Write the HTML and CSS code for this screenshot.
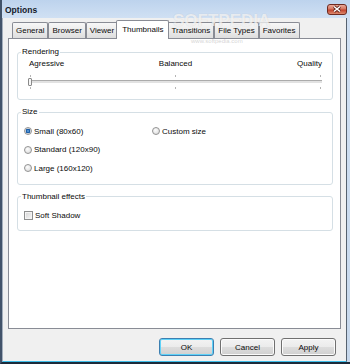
FILE: index.html
```html
<!DOCTYPE html>
<html lang="en">

<head>
  <meta charset="UTF-8">
  <title>Options</title>
  <link rel="stylesheet" href="styles.css">
</head>

<body>
  <div class="window">
    <!--標題欄-->
    <div class="titlebar">
      <span class="title">Options</span>
      <span class="close">
        <svg width="10" height="8" viewBox="0 0 10 8">
          <path d="M2 1.5 8 6.5M8 1.5 2 6.5" stroke="#5a1c12" stroke-width="3" />
          <path d="M2 1.5 8 6.5M8 1.5 2 6.5" stroke="#fff" stroke-width="1.6" />
        </svg>
      </span>
    </div>

    <div class="client">
      <!--選項卡-->
      <div class="tabs">
        <span class="tab">General</span>
        <span class="tab">Browser</span>
        <span class="tab">Viewer</span>
        <span class="tab selected">Thumbnails</span>
        <span class="tab">Transitions</span>
        <span class="tab">File Types</span>
        <span class="tab">Favorites</span>
      </div>

      <div class="panel">
        <fieldset class="group">
          <legend>Rendering</legend>
          <div class="scale">
            <div class="scale-labels">
              <span>Agressive</span>
              <span class="mid">Balanced</span>
              <span class="end">Quality</span>
            </div>
            <div class="ticks top"><i></i><i></i><i></i></div>
            <div class="track"><span class="thumb"></span></div>
            <div class="ticks bottom"><i></i><i></i><i></i></div>
          </div>
        </fieldset>

        <fieldset class="group size">
          <legend>Size</legend>
          <div class="options">
            <label class="opt"><span class="radio checked"></span>Small (80x60)</label>
            <label class="opt"><span class="radio"></span>Custom size</label>
            <label class="opt"><span class="radio"></span>Standard (120x90)</label>
            <span></span>
            <label class="opt"><span class="radio"></span>Large (160x120)</label>
          </div>
        </fieldset>

        <fieldset class="group effects">
          <legend>Thumbnail effects</legend>
          <label class="opt"><span class="check"></span>Soft Shadow</label>
        </fieldset>
      </div>

      <!--按鈕-->
      <div class="buttons">
        <button class="btn default">OK</button>
        <button class="btn">Cancel</button>
        <button class="btn">Apply</button>
      </div>
    </div>

    <div class="watermark">SOFTPEDIA<small>www.softpedia.com</small></div>
  </div>
</body>

</html>
```

FILE: styles.css
```css
* {
  margin: 0;
  padding: 0;
  box-sizing: border-box;
}

body {
  width: 350px;
  height: 364px;
  overflow: hidden;
  font-family: "Liberation Sans", Arial, sans-serif;
  font-size: 8px;
  color: #0a0a0a;
}

.window {
  /*開啟相對定位，給水印用*/
  position: relative;
  width: 350px;
  height: 364px;
  display: flex;
  flex-direction: column;
  background: linear-gradient(#bdd3ed, #d0e0f3 18px, #c6d7eb);
  border-left: 2px solid #42536a;
  border-bottom: 2px solid #1b2a3a;
}

.titlebar {
  height: 18px;
  display: flex;
  align-items: center;
  justify-content: space-between;
  padding: 0 3px 0 3px;
}

.title {
  font-weight: bold;
  font-size: 8.5px;
  color: #15192a;
  padding-top: 1px;
}

.close {
  width: 20px;
  height: 11px;
  border: 1px solid #6e2a20;
  border-radius: 3px;
  background: linear-gradient(#eaa999, #d6755f 45%, #c2432e 55%, #dc8a6e);
  display: flex;
  align-items: center;
  justify-content: center;
}

.client {
  flex: 1;
  margin-right: 3px;
  background: #f0f0f0;
  border-left: 1px solid #a4afbd;
  border-right: 1px solid #56626f;
  border-bottom: 1px solid #3cbde8;
  padding: 2px 5px 0 5px;
  display: flex;
  flex-direction: column;
}

/*選項卡*/
.tabs {
  display: flex;
  align-items: flex-end;
  height: 18px;
  padding-left: 4px;
}

.tab {
  height: 16px;
  padding: 0 3px;
  border: 1px solid #898c95;
  border-bottom: 0;
  border-radius: 2px 2px 0 0;
  background: linear-gradient(#f7f7f7, #ebebeb 50%, #dedede);
  line-height: 15px;
  white-space: nowrap;
}

.tab.selected {
  position: relative;
  z-index: 1;
  height: 19px;
  margin: 0 -2px -1px;
  padding: 1px 5px 0;
  background: #fff;
}

.panel {
  height: 291px;
  background: #fff;
  border: 1px solid #898c95;
  padding: 8px 7px 0 8px;
  display: flex;
  flex-direction: column;
  gap: 7px;
}

.group {
  border: 1px solid #d5dfe5;
  border-radius: 3px;
  padding: 0 7px 0 6px;
  min-width: 0;
}

.group legend {
  line-height: 10px;
  padding: 0 1px;
  margin-left: -3px;
}

/*滑塊*/
.scale {
  margin: 2px 3px 10px 6px;
}

.scale-labels {
  display: grid;
  grid-template-columns: 1fr 1fr 1fr;
  line-height: 10px;
  margin-left: -1px;
}

.scale-labels .mid {
  text-align: center;
}

.scale-labels .end {
  text-align: right;
}

.ticks {
  display: flex;
  justify-content: space-between;
  height: 2px;
  padding: 0 1px 0 0;
}

.ticks i {
  width: 1px;
  background: #b4b4b4;
}

.ticks.top {
  margin-top: 6px;
}

.ticks.bottom {
  margin-top: 4px;
}

.track {
  position: relative;
  height: 3px;
  margin-top: 3px;
  border-top: 1px solid #ababab;
  background: #e2e2e2;
}

.thumb {
  position: absolute;
  left: -2px;
  top: -3px;
  width: 4px;
  height: 8px;
  border: 1px solid #8a8a8a;
  border-radius: 1px;
  background: #f6f6f6;
}

/*單選*/
.size .options {
  display: grid;
  grid-template-columns: 128px 1fr;
  grid-auto-rows: 18.5px;
  margin-top: 5px;
  margin-bottom: 6px;
}

.opt {
  display: flex;
  align-items: center;
  gap: 2px;
  white-space: nowrap;
}

.radio {
  width: 8px;
  height: 8px;
  border: 1px solid #939393;
  border-radius: 50%;
  background: radial-gradient(circle at 40% 35%, #fdfdfd, #d6d6d6);
}

.radio.checked {
  background: radial-gradient(circle, #74b4ec 0, #1b5ea8 1.6px, #2d6bb0 2.2px, #e6e6e6 2.6px, #d0d0d0);
}

.effects .opt {
  height: 12px;
  margin: 8px 0 8px;
  gap: 2px;
}

.check {
  width: 9px;
  height: 9px;
  border: 1px solid #8e8f8f;
  background: linear-gradient(135deg, #d4d4d4, #f8f8f8);
  box-shadow: inset 0 0 0 1px #f4f4f4;
}

/*按鈕*/
.buttons {
  display: flex;
  justify-content: flex-end;
  gap: 6px;
  margin-top: 9px;
  padding-right: 5px;
}

.btn {
  width: 55px;
  height: 18px;
  border: 1px solid #707070;
  border-radius: 3px;
  background: linear-gradient(#f3f3f3, #ebebeb 50%, #dddddd 50%, #d0d0d0);
  box-shadow: inset 0 0 0 1px #fbfbfb;
  font-family: inherit;
  font-size: 8px;
  color: #0a0a0a;
}

.btn.default {
  border-color: #3c7fb1;
  box-shadow: inset 0 0 0 1px #5fd2f8;
}

/*水印*/
.watermark {
  position: absolute;
  left: 171px;
  top: 14px;
  font-size: 17px;
  font-weight: bold;
  line-height: 13px;
  color: rgba(255, 255, 255, 0.7);
  text-shadow: 0 0 1px rgba(120, 120, 120, 0.3);
  pointer-events: none;
}

.watermark small {
  display: block;
  margin: 11px 0 0 18px;
  font-size: 6px;
  font-weight: normal;
  line-height: 6px;
  color: rgba(175, 175, 175, 0.55);
  text-shadow: none;
}
```
